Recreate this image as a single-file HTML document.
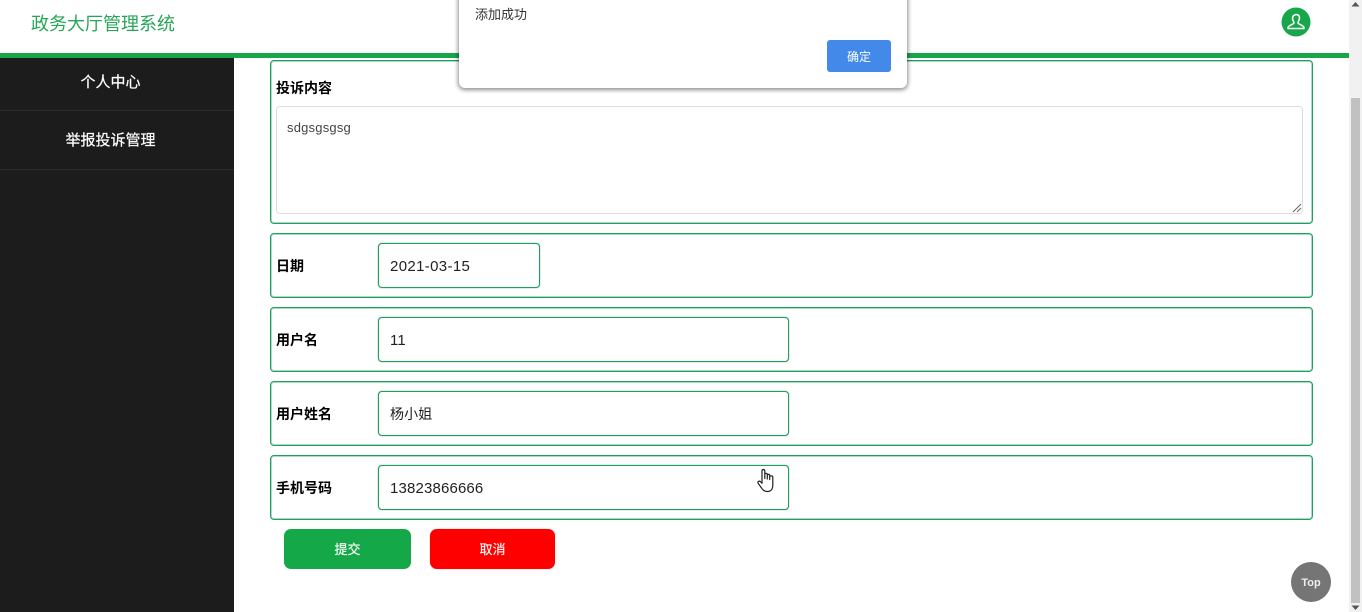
<!DOCTYPE html>
<html lang="zh">
<head>
<meta charset="utf-8">
<title>政务大厅管理系统</title>
<style>
html,body{margin:0;padding:0;width:1362px;height:612px;overflow:hidden;background:#fff;}
body{position:relative;font-family:"Liberation Sans","Noto Sans CJK SC",sans-serif;color:#000;}
div,span{position:absolute;box-sizing:border-box;}
.logo{left:31px;top:11px;font-size:18px;line-height:26px;color:#27a558;white-space:nowrap;}
.bar{left:0;top:53px;width:1349px;height:5px;background:#17a64a;}
.side{left:0;top:58px;width:234px;height:554px;background:#1c1c1c;}
.mi{left:0;width:221px;text-align:center;color:#fff;font-size:15px;line-height:20px;-webkit-text-stroke:.2px #fff;}
.dv{left:0;width:234px;height:1px;background:#2c2c2c;}
.box{left:270px;width:1043px;border:1px solid #1f9e60;box-shadow:inset 0 0 0 1px #a8dcc4;border-radius:4px;background:#fff;}
.lb{left:276px;font-size:14px;font-weight:bold;line-height:20px;white-space:nowrap;}
.ip{left:378px;height:45px;border:1px solid #1f9e60;box-shadow:0 0 1px #1f9e60;border-radius:4px;background:#fff;font-size:15px;line-height:45px;padding-left:11px;letter-spacing:.15px;color:#222;white-space:nowrap;}
.ta{left:276px;top:106px;width:1027px;height:108px;border:1px solid #ddd;border-radius:4px;background:#fff;}
.ttx{left:287px;top:119px;font-size:13px;line-height:18px;color:#444;letter-spacing:.2px;}
.btn{top:529px;height:40px;border-radius:7px;color:#fff;font-size:13px;line-height:41px;text-align:center;-webkit-text-stroke:.15px #fff;}
.dlg{left:459px;top:-10px;width:448px;height:98px;background:#fff;border-radius:0 0 6px 6px;box-shadow:0 1px 4px 1px rgba(0,0,0,.45);}
.sb{left:1349px;top:0;width:13px;height:612px;background:#f1f1f1;}
.th{left:1351px;top:98px;width:9px;height:505px;background:#c1c1c1;}
.top{left:1291px;top:562px;width:40px;height:40px;border-radius:50%;background:#757575;color:#eee;font-size:11px;font-weight:bold;line-height:42px;text-align:center;}
svg{position:absolute;display:block;}
</style>
</head>
<body>
<div class="logo">政务大厅管理系统</div>
<div class="bar"></div>

<div class="side"></div>
<div class="mi" style="top:73px;">个人中心</div>
<div class="dv" style="top:110px;"></div>
<div class="mi" style="top:131px;">举报投诉管理</div>
<div class="dv" style="top:169px;"></div>

<div class="box" style="top:60px;height:164px;"></div>
<div class="lb" style="top:78px;">投诉内容</div>
<div class="ta"></div>
<div class="ttx">sdgsgsgsg</div>
<svg style="left:1292px;top:203px;" width="10" height="10" viewBox="0 0 10 10"><path d="M1 9 9 1M5 9 9 5" stroke="#666" stroke-width="1" fill="none"/></svg>

<div class="box" style="top:233px;height:65px;"></div>
<div class="lb" style="top:256px;">日期</div>
<div class="ip" style="top:243px;width:162px;letter-spacing:.35px;">2021-03-15</div>

<div class="box" style="top:307px;height:65px;"></div>
<div class="lb" style="top:330px;">用户名</div>
<div class="ip" style="top:317px;width:411px;">11</div>

<div class="box" style="top:381px;height:65px;"></div>
<div class="lb" style="top:404px;">用户姓名</div>
<div class="ip" style="top:391px;width:411px;font-size:14px;">杨小姐</div>

<div class="box" style="top:455px;height:65px;"></div>
<div class="lb" style="top:478px;">手机号码</div>
<div class="ip" style="top:465px;width:411px;">13823866666</div>

<svg style="left:755px;top:466px;" width="22" height="28" viewBox="0 0 22 28"><path d="M7 16V5.000C7 3 9.800 3 9.800 5V12.500V8.500C9.800 7 12.300 7 12.300 8.500V13V9.500C12.300 8 14.700 8 14.700 9.500V13.500V10.800C14.700 9.500 17.800 9.500 17.800 11V19C17.800 23 16 25.500 12.500 25.500C9.500 25.500 8 24.500 6.500 22L3.300 17.500C2.200 15.800 4 14.500 5.300 15.500L7 17.300Z" fill="#fff" stroke="#222" stroke-width="1.200" stroke-linejoin="round"/></svg>

<div class="btn" style="left:284px;width:127px;background:#15a849;">提交</div>
<div class="btn" style="left:430px;width:125px;background:#ff0000;box-shadow:0 0 1px #e88;">取消</div>

<svg style="left:1281px;top:7px;" width="30" height="30" viewBox="0 0 30 30"><circle cx="15" cy="15" r="14.500" fill="#17a64a"/><path d="M12 13.500C10.800 10.500 12 8 15 7.500C18 7.500 19.300 10 18 13C17.500 14 17 15 17 16C17 17.200 22 17.800 23 20.500V21.500H7V20.500C8 17.800 13 17.200 13 16C13 15 12.400 14.500 12 13.500Z" fill="none" stroke="#fff" stroke-width="1.500" stroke-linejoin="round"/></svg>

<div class="dlg"></div>
<div style="left:475px;top:6px;font-size:13px;line-height:18px;color:#333;white-space:nowrap;">添加成功</div>
<div style="left:827px;top:40px;width:64px;height:32px;background:#4289ea;border-radius:3px;color:#fff;font-size:12px;line-height:34px;text-align:center;">确定</div>

<div class="sb"></div>
<div class="th"></div>
<svg style="left:1349px;top:0;" width="13" height="612" viewBox="0 0 13 612"><path d="M6.500 2 10.500 6.500H2.500ZM6.500 610 2.500 605.500H10.500Z" fill="#555"/></svg>

<div class="top">Top</div>
</body>
</html>
